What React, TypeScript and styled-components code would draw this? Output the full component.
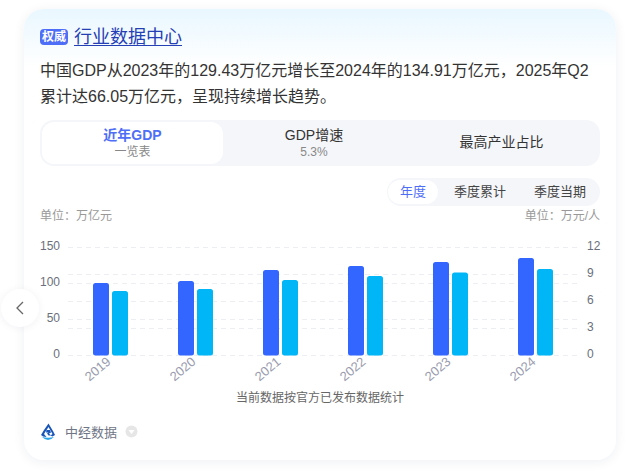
import React from "react";
import styled, { createGlobalStyle } from "styled-components";

const Global = createGlobalStyle`
  html, body { margin: 0; padding: 0; background: #fff; }
  body { width: 639px; height: 473px; overflow: hidden; font-family: "Liberation Sans", "Noto Sans CJK SC", sans-serif; }
`;
const Page = styled.div`
  position: relative;
  box-sizing: border-box;
  width: 639px;
  height: 473px;
  padding: 9px 23px 13px 24px;
`;
const Card = styled.div`
  box-sizing: border-box;
  height: 451px;
  padding: 16px 16px 0;
  border-radius: 20px;
  background: linear-gradient(180deg, #e9f7ff 0, #ffffff 58px);
  box-shadow: 0 2px 12px rgba(30, 40, 80, 0.07);
`;
const TitleRow = styled.div`
  display: flex;
  align-items: center;
  gap: 6px;
  height: 24px;
`;
const Badge = styled.span`
  width: 28px;
  height: 16px;
  border-radius: 4px;
  background: #4f6ef7;
  color: #fff;
  font-size: 12px;
  font-weight: 700;
  line-height: 16px;
  text-align: center;
  white-space: nowrap;
`;
const Title = styled.a`
  color: #2540b5;
  font-size: 18px;
  line-height: 24px;
  text-decoration: underline;
  text-underline-offset: 2px;
`;
const Summary = styled.p`
  margin: 9px 0 0;
  color: #333;
  font-size: 16px;
  line-height: 26px;
`;
const Tabs = styled.div`
  display: grid;
  grid-template-columns: 181px 182px 1fr;
  box-sizing: border-box;
  height: 46px;
  margin-top: 10px;
  padding: 2px;
  border-radius: 14px;
  background: #f5f6fa;
`;
const Tab = styled.div<{ $active?: boolean }>`
  display: flex;
  flex-direction: column;
  align-items: center;
  justify-content: center;
  padding-bottom: 2px;
  box-sizing: border-box;
  border-radius: 12px;
  background: ${(p) => (p.$active ? "#fff" : "transparent")};
`;
const TabName = styled.span<{ $active?: boolean }>`
  color: ${(p) => (p.$active ? "#4f6ef7" : "#333")};
  font-size: 14px;
  font-weight: ${(p) => (p.$active ? 700 : 400)};
  line-height: 20px;
`;
const TabSub = styled.span`
  color: #888;
  font-size: 12px;
  line-height: 15px;
`;
const PeriodRow = styled.div`
  display: flex;
  justify-content: flex-end;
  margin-top: 12px;
`;
const Periods = styled.div`
  display: flex;
  box-sizing: border-box;
  height: 28px;
  width: 213px;
  padding: 2px 0 2px 1px;
  border-radius: 14px;
  background: #f5f6fa;
`;
const Period = styled.div<{ $active?: boolean; $w: number }>`
  width: ${(p) => p.$w}px;
  border-radius: 12px;
  background: ${(p) => (p.$active ? "#fff" : "transparent")};
  color: ${(p) => (p.$active ? "#4f6ef7" : "#444")};
  font-size: 13px;
  line-height: 24px;
  text-align: center;
`;
const Units = styled.div`
  display: flex;
  justify-content: space-between;
  color: #999;
  font-size: 12px;
  line-height: 16px;
  margin-top: 2px;
`;
const Chart = styled.svg`
  display: block;
  width: 560px;
  height: 160px;
  margin-top: 13px;
  overflow: visible;
`;
const Caption = styled.div`
  color: #666;
  font-size: 12px;
  line-height: 16px;
  text-align: center;
  margin-top: -7px;
`;
const Source = styled.div`
  display: flex;
  align-items: center;
  margin-top: 16px;
  height: 18px;
`;
const SourceName = styled.span`
  margin-left: 9px;
  color: #6f7686;
  font-size: 13px;
`;
const Prev = styled.button`
  position: absolute;
  left: 1px;
  top: 289px;
  display: flex;
  align-items: center;
  justify-content: center;
  width: 38px;
  height: 38px;
  padding: 0;
  border: 0;
  border-radius: 50%;
  background: #fff;
  box-shadow: 0 1px 8px rgba(30, 40, 80, 0.06);
`;

const years = [
  { y: "2019", x: 53, a: 283, b: 291 },
  { y: "2020", x: 138, a: 281, b: 289 },
  { y: "2021", x: 223, a: 270, b: 280 },
  { y: "2022", x: 308, a: 266, b: 276 },
  { y: "2023", x: 393, a: 262, b: 272.5 },
  { y: "2024", x: 478, a: 258, b: 269 },
];
const top = 237; // page y of chart origin
const grid = [247, 274, 283, 301, 319, 328, 355];
const left = [["150", 247], ["100", 283], ["50", 319], ["0", 355]] as const;
const right = [["12", 247], ["9", 274], ["6", 301], ["3", 328], ["0", 355]] as const;

const BarChart = () => (
  <Chart viewBox="0 0 560 160">
    {grid.map((g) => (
      <line key={g} x1="28" x2="539" y1={g - top + 0.5} y2={g - top + 0.5} stroke="#eceef1" strokeWidth="1" strokeDasharray="5 4" />
    ))}
    {left.map(([t, y]) => (
      <text key={t} x="20" y={y - top + 3.2} textAnchor="end" fontSize="12" fill="#6b6f7b">{t}</text>
    ))}
    {right.map(([t, y]) => (
      <text key={t} x="547" y={y - top + 3.2} fontSize="12" fill="#6b6f7b">{t}</text>
    ))}
    {years.map((d) => (
      <g key={d.y}>
        <rect x={d.x} y={d.a - top} width="16" height={355.5 - d.a} rx="2.5" fill="#3366ff" />
        <rect x={d.x + 19} y={d.b - top} width="16" height={355.5 - d.b} rx="2.5" fill="#00b6f7" />
        <text x={d.x + 16} y="127" textAnchor="end" fontSize="13" fill="#9a9caf" transform={`rotate(-40 ${d.x + 16} 123)`}>{d.y}</text>
      </g>
    ))}
  </Chart>
);

export default function App() {
  return (
    <Page>
      <Global />
      <Card>
        <TitleRow>
          <Badge>权威</Badge>
          <Title href="#">行业数据中心</Title>
        </TitleRow>
        <Summary>
          中国GDP从2023年的129.43万亿元增长至2024年的134.91万亿元，2025年Q2累计达66.05万亿元，呈现持续增长趋势。
        </Summary>
        <Tabs>
          <Tab $active>
            <TabName $active>近年GDP</TabName>
            <TabSub>一览表</TabSub>
          </Tab>
          <Tab>
            <TabName>GDP增速</TabName>
            <TabSub>5.3%</TabSub>
          </Tab>
          <Tab>
            <TabName>最高产业占比</TabName>
          </Tab>
        </Tabs>
        <PeriodRow>
          <Periods>
            <Period $active $w={50}>年度</Period>
            <Period $w={84}>季度累计</Period>
            <Period $w={76}>季度当期</Period>
          </Periods>
        </PeriodRow>
        <Units>
          <span>单位：万亿元</span>
          <span>单位：万元/人</span>
        </Units>
        <BarChart />
        <Caption>当前数据按官方已发布数据统计</Caption>
        <Source>
          <svg width="16" height="17" viewBox="0 0 16 17">
            <path d="M8.5 0.5 L13 8 L15 12 L12.5 13.5 L10.5 12.5 L12.5 11 L8.5 4 L4 11 L6.5 14 L3 13.5 L1 12 L4 7 Z" fill="#1a56b8" />
            <path d="M6.5 7 H10 L11 9.5 L9 10.5 L11 12.5 H8.5 L7 10.5 L8.5 9.5 H6 Z" fill="#1a56b8" />
            <path d="M2 14 Q8 15.5 14 14 Q11 17 8 17 Q5 17 2 14 Z" fill="#2aa5e8" />
          </svg>
          <SourceName>中经数据</SourceName>
          <svg width="13" height="13" viewBox="0 0 13 13" style={{ marginLeft: 8 }}>
            <circle cx="6.5" cy="6.5" r="6" fill="#e6e6e6" />
            <path d="M3.5 5 H9.5 L6.5 9 Z" fill="#fff" />
          </svg>
        </Source>
      </Card>
      <Prev aria-label="上一个">
        <svg width="12" height="16" viewBox="0 0 12 16">
          <path d="M9 2 L3 8 L9 14" fill="none" stroke="#666" strokeWidth="1.3" />
        </svg>
      </Prev>
    </Page>
  );
}
